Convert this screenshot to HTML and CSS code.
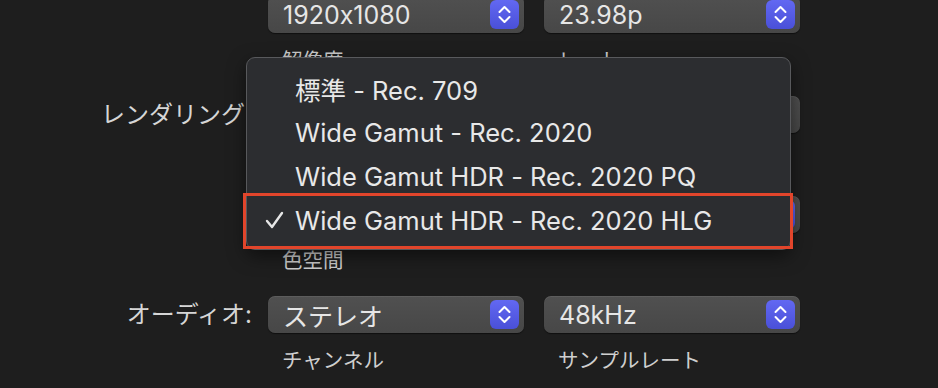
FILE: index.html
```html
<html>

<head>
  <meta charset="utf-8">
  <link rel="stylesheet" href="styles.css">
</head>

<body>
  <div class="form">
    <div class="row">
      <div class="label"></div>
      <div class="field">
        <div class="popup half"><span>1920x1080</span><i class="stepper"></i></div>
        <div class="sub">解像度</div>
      </div>
      <div class="field">
        <div class="popup half"><span>23.98p</span><i class="stepper"></i></div>
        <div class="sub">レート</div>
      </div>
    </div>

    <div class="row">
      <div class="label">レンダリング:</div>
      <div class="field">
        <div class="popup wide"><span></span></div>
      </div>
    </div>

    <div class="row">
      <div class="label"></div>
      <div class="field">
        <div class="popup wide"><span></span><i class="stepper"></i></div>
        <div class="sub">色空間</div>
      </div>
    </div>

    <div class="row">
      <div class="label">オーディオ:</div>
      <div class="field">
        <div class="popup half"><span>ステレオ</span><i class="stepper"></i></div>
        <div class="sub">チャンネル</div>
      </div>
      <div class="field">
        <div class="popup half"><span>48kHz</span><i class="stepper"></i></div>
        <div class="sub">サンプルレート</div>
      </div>
    </div>
  </div>

  <div class="menu">
    <div class="item"><span class="check"></span>標準 - Rec. 709</div>
    <div class="item"><span class="check"></span>Wide Gamut - Rec. 2020</div>
    <div class="item"><span class="check"></span>Wide Gamut HDR - Rec. 2020 PQ</div>
    <div class="item"><span class="check"><svg width="20" height="20" viewBox="0 0 20 20"><polyline points="2,11 7,17 17,3" fill="none" stroke="#e6e6e6" stroke-width="2.4" stroke-linecap="round" stroke-linejoin="round"/></svg></span>Wide Gamut HDR - Rec. 2020 HLG</div>
  </div>
  <div class="highlight"></div>
</body>

</html>
```

FILE: styles.css
```css
body {
  margin: 0;
  background-color: #1e1e1e;
  font-family: "Inter", "Noto Sans CJK JP", sans-serif;
  font-feature-settings: "calt" 0;
  color: #e4e4e4;
  width: 938px;
  height: 388px;
  overflow: hidden;
  position: relative;
}

.form {
  margin-top: -4px;
}

.row {
  display: flex;
  height: 100px;
  gap: 20px;
}

.label {
  width: 252px;
  height: 37px;
  line-height: 37px;
  text-align: right;
  font-size: 24px;
  color: #d6d6d6;
  margin-right: -4px;
}

.field {
  display: flex;
  flex-direction: column;
}

.popup {
  box-sizing: border-box;
  height: 37px;
  border-radius: 7px;
  background: linear-gradient(#505050, #474747);
  box-shadow: 0 1px 1px rgba(0, 0, 0, 0.5), inset 0 1px 0 rgba(255, 255, 255, 0.08);
  display: flex;
  align-items: center;
  justify-content: space-between;
  padding: 0 5px 0 15px;
  font-size: 25px;
  color: #e6e6e6;
}

.half {
  width: 256px;
}

.wide {
  width: 532px;
}

.stepper {
  width: 29px;
  height: 29px;
  border-radius: 6px;
  background-image:
    url("data:image/svg+xml,%3Csvg xmlns='http://www.w3.org/2000/svg' width='29' height='29'%3E%3Cpolyline points='9.5,12 14.5,7 19.5,12' fill='none' stroke='white' stroke-width='2' stroke-linecap='round' stroke-linejoin='round'/%3E%3Cpolyline points='9.5,17 14.5,22 19.5,17' fill='none' stroke='white' stroke-width='2' stroke-linecap='round' stroke-linejoin='round'/%3E%3C/svg%3E"),
    linear-gradient(#6268f2, #4a50d8);
}

.sub {
  margin-top: 11px;
  padding-left: 14px;
  font-size: 20.5px;
  color: #cfcfcf;
}

.menu {
  position: absolute;
  left: 246px;
  top: 57px;
  width: 545px;
  height: 193px;
  box-sizing: border-box;
  padding-top: 8px;
  background-color: #2c2d30;
  border: 1px solid #58595c;
  border-radius: 9px;
  box-shadow: 0 6px 18px rgba(0, 0, 0, 0.5);
}

.item {
  height: 44px;
  display: flex;
  align-items: center;
  font-size: 25.5px;
  color: #e8e8e8;
}

.check {
  width: 48px;
  display: flex;
  justify-content: flex-end;
  padding-right: 10px;
  box-sizing: border-box;
}

.highlight {
  position: absolute;
  left: 243px;
  top: 193px;
  width: 550px;
  height: 56px;
  box-sizing: border-box;
  border: 3px solid #e2452b;
}
```
